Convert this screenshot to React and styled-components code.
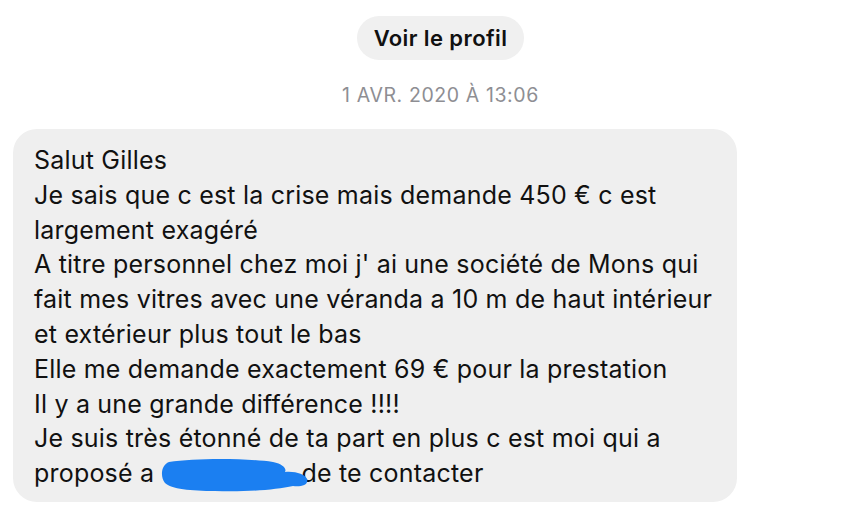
import styled, { createGlobalStyle } from "styled-components";

const GlobalStyle = createGlobalStyle`
  body {
    margin: 0;
    background: #fff;
    font-family: "Inter", "Liberation Sans", Arial, sans-serif;
  }
`;

const Page = styled.div`
  width: 847px;
  height: 515px;
  display: flex;
  flex-direction: column;
  overflow: hidden;
`;

const Header = styled.div`
  display: flex;
  flex-direction: column;
  align-items: center;
  padding-top: 16px;
  padding-left: 34px;
`;

const ProfileButton = styled.button`
  height: 44px;
  padding: 0 17px;
  border: none;
  border-radius: 22px;
  background: #f0f0f0;
  color: #111;
  font-family: "Inter", "Liberation Sans", Arial, sans-serif;
  font-size: 22px;
  font-weight: 600;
  letter-spacing: 0.4px;
  cursor: pointer;
`;

const Timestamp = styled.div`
  margin-top: 23px;
  color: #8e8e93;
  font-size: 19.5px;
  letter-spacing: 0.6px;
`;

const Bubble = styled.div`
  width: 724px;
  margin: 22px 0 0 13px;
  padding: 14px 21px 11px;
  box-sizing: border-box;
  background: #efefef;
  border-radius: 24px;
  color: #111;
  font-size: 25px;
  letter-spacing: 0.2px;
  line-height: 34.8px;
`;

const Line = styled.div`
  white-space: nowrap;
`;

const Hidden = styled.span`
  position: relative;
  display: inline-block;
  width: 140px;
  height: 1em;
  vertical-align: middle;
`;

const Redaction = styled.svg`
  position: absolute;
  left: -6px;
  top: -7px;
`;

const lines = [
  "Salut Gilles",
  "Je sais que c est la crise mais demande 450 € c est",
  "largement exagéré",
  "A titre personnel chez moi j' ai une société de Mons qui",
  "fait mes vitres avec une véranda a 10 m de haut intérieur",
  "et extérieur plus tout le bas",
  "Elle me demande exactement 69 € pour la prestation",
  "Il y a une grande différence !!!!",
  "Je suis très étonné de ta part en plus c est moi qui a",
];

export default function App() {
  return (
    <>
      <GlobalStyle />
      <Page>
        <Header>
          <ProfileButton>Voir le profil</ProfileButton>
          <Timestamp>1 AVR. 2020 À 13:06</Timestamp>
        </Header>
        <Bubble>
          {lines.map((l) => (
            <Line key={l}>{l}</Line>
          ))}
          <Line>
            proposé a{" "}
            <Hidden>
              <Redaction width="160" height="40" viewBox="0 0 160 40">
                <path
                  d="M14 6 C40 2 90 2 118 6 C128 8 132 13 130 16 C140 15 150 18 152 23 C154 29 146 31 138 30 C120 34 90 36 60 35 C36 35 16 33 10 27 C5 21 6 9 14 6 Z"
                  fill="#1b7ff1"
                />
              </Redaction>
            </Hidden>
            de te contacter
          </Line>
        </Bubble>
      </Page>
    </>
  );
}
